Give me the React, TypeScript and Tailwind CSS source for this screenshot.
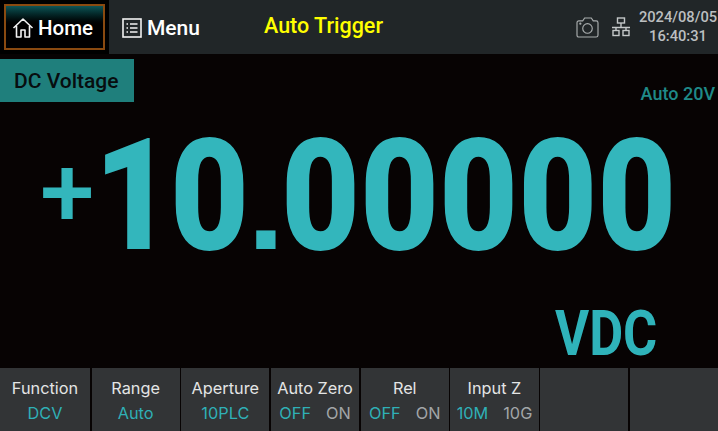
import React from "react";

const keys = [
  { t: "Function", v: "DCV" },
  { t: "Range", v: "Auto" },
  { t: "Aperture", v: "10PLC" },
  { t: "Auto Zero", a: "OFF", b: "ON" },
  { t: "Rel", a: "OFF", b: "ON" },
  { t: "Input Z", a: "10M", b: "10G" },
  { t: "" },
  { t: "" },
];

export default function App() {
  return (
    <div className="w-[718px] h-[431px] overflow-hidden flex flex-col bg-[#070303] font-['Roboto',sans-serif]">
      <header className="h-[54px] flex bg-[#212628]">
        <div className="w-[109px] bg-black pt-[4px] pl-[4px] pr-[4px] pb-[4px]">
          <div className="h-full border-2 border-[#8a4a10] bg-gradient-to-b from-[#0f5557] via-black to-black flex items-center pl-[6px] gap-[4px] pt-[1px]">
            <svg width="22" height="22" viewBox="0 0 22 22" fill="none" stroke="#f2f2f2" strokeWidth="1.6" strokeLinejoin="round">
              <path d="M1.5 11 11 2l9.5 9M4.5 9v11h4.5v-7h4v7h4.5V9" />
            </svg>
            <span className="text-white font-medium text-[20.5px] leading-none pt-[1px]">Home</span>
          </div>
        </div>
        <div className="flex items-center pl-[13px] gap-[5px] w-[155px] pt-[1px]">
          <svg width="20" height="20" viewBox="0 0 20 20" fill="none" stroke="#f2f2f2">
            <rect x="1" y="1" width="18" height="18" strokeWidth="1.6" />
            <path d="M4.5 6h1.5M8 6h7.5M4.5 10h1.5M8 10h7.5M4.5 14h1.5M8 14h7.5" strokeWidth="1.5" />
          </svg>
          <span className="text-white font-medium text-[21px] leading-none pt-[1px]">Menu</span>
        </div>
        <div className="text-[#ffff00] font-medium text-[21.5px] flex items-center pb-[1px]">Auto Trigger</div>
        <div className="ml-auto flex items-center">
          <svg width="23" height="21" viewBox="0 0 24 22" fill="none" stroke="#a9adae" strokeWidth="1.2" className="mr-[13px]">
            <path d="M1 6q0-2 2-2h4l2-3h7l2 3h3q2 0 2 2v13q0 2-2 2H3q-2 0-2-2z" />
            <circle cx="12" cy="12" r="5" />
            <circle cx="4.5" cy="7" r=".6" />
          </svg>
          <svg width="18" height="20" viewBox="0 0 18 20" fill="none" stroke="#c4c7c8" strokeWidth="1.4" className="mr-[8px]">
            <rect x="5.5" y="1" width="7" height="5" />
            <path d="M9 6v4M0 10.5h18M4 10.5v3M14 10.5v3" />
            <rect x="1" y="13.5" width="6" height="5" />
            <rect x="11" y="13.5" width="6" height="5" />
          </svg>
          <div className="w-[80px] text-[#bcbfc0] font-medium text-[14.7px] leading-[19px] text-center whitespace-nowrap pb-[1px]">
            2024/08/05
            <br />
            16:40:31
          </div>
        </div>
      </header>

      <main className="flex-1 min-h-0 flex flex-col">
        <div className="flex justify-between items-start mt-[5px]">
          <div className="w-[134px] h-[43px] bg-[#1f7f7c] text-[#070d0f] font-medium text-[21px] flex items-center pl-[14px] pt-[3px]">DC Voltage</div>
          <div className="text-[#1f8a88] font-medium text-[18px] leading-none mt-[26px] mr-[3px]">Auto 20V</div>
        </div>
        <div className="h-[172px] flex items-baseline text-[#33b6bc] leading-[186px] whitespace-nowrap pl-[40px]">
          <span className="w-[70px] text-[98px] font-medium -translate-y-[23px]">+</span>
          <span className="w-[76px] text-[155px] font-black origin-left scale-x-[.88]">1</span>
          <span className="w-[76.5px] text-[155px] font-black origin-left scale-x-[.88]">0</span>
          <span className="w-[38px] text-[124px] font-bold font-['Liberation_Sans',sans-serif] origin-left scale-x-[1.1]">.</span>
          <span className="text-[155px] font-black origin-left scale-x-[.88]">00000</span>
        </div>
        <div className="flex-1 flex justify-end items-start pr-[61px]">
          <span className="text-[#2fb3ba] font-bold text-[63px] leading-none mt-[27px] origin-right scale-x-[.83]">VDC</span>
        </div>
      </main>

      <footer className="h-[63px] grid grid-cols-[90px_repeat(7,1fr)] gap-[1.5px] font-['Inter',sans-serif] text-[16.3px]">
        {keys.map((k, i) => (
          <div key={i} className="bg-[#323436] flex flex-col items-center pt-[10px] whitespace-nowrap">
            <div className="text-[#e4e5e5] h-[24px] leading-[20px]">{k.t}</div>
            {k.v && <div className="text-[#2fb0b6] leading-[22px]">{k.v}</div>}
            {k.a && (
              <div className="flex gap-[15px] leading-[22px]">
                <span className="text-[#2fb0b6]">{k.a}</span>
                <span className="text-[#a2a6a8]">{k.b}</span>
              </div>
            )}
          </div>
        ))}
      </footer>
    </div>
  );
}
